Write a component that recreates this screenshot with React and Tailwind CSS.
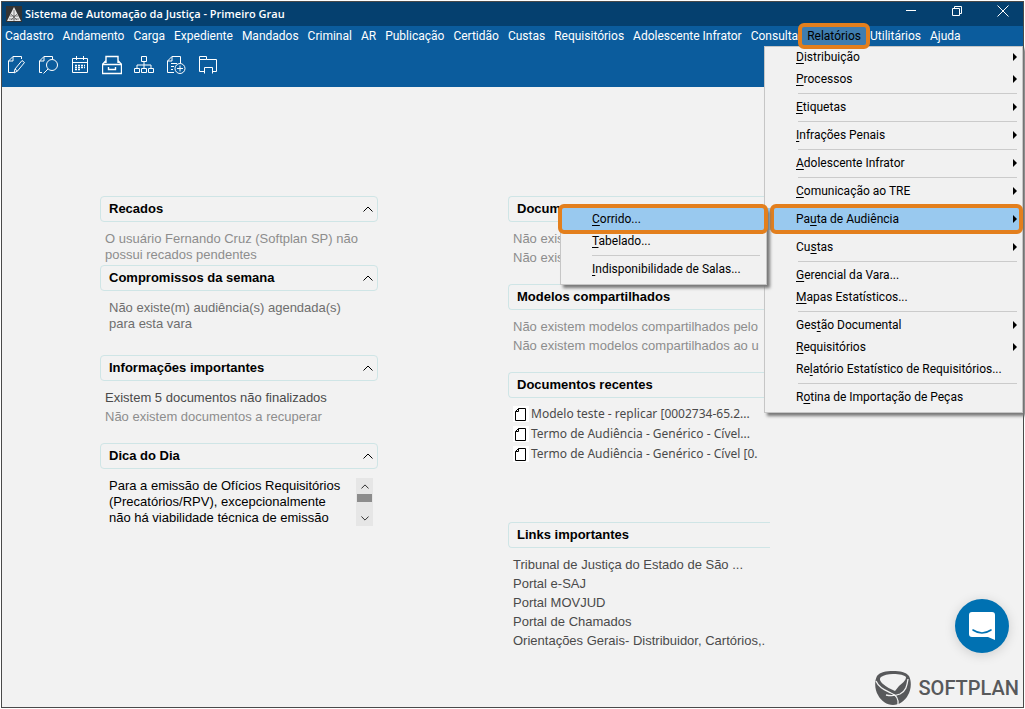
const menuBar = [
  "Cadastro",
  "Andamento",
  "Carga",
  "Expediente",
  "Mandados",
  "Criminal",
  "AR",
  "Publicação",
  "Certidão",
  "Custas",
  "Requisitórios",
  "Adolescente Infrator",
  "Consulta",
  "Relatórios",
  "Utilitários",
  "Ajuda",
];

// "&" marks the access key of an entry, "-" is a separator
const reportMenu = [
  { label: "&Distribuição", sub: true },
  { label: "&Processos", sub: true },
  "-",
  { label: "&Etiquetas", sub: true },
  "-",
  { label: "&Infrações Penais", sub: true },
  "-",
  { label: "&Adolescente Infrator", sub: true },
  "-",
  { label: "&Comunicação ao TRE", sub: true },
  "-",
  { label: "Pa&uta de Audiência", sub: true, open: true },
  "-",
  { label: "Cu&stas", sub: true },
  "-",
  { label: "&Gerencial da Vara..." },
  { label: "&Mapas Estatísticos..." },
  "-",
  { label: "Ges&tão Documental", sub: true },
  { label: "&Requisitórios", sub: true },
  { label: "Re&latório Estatístico de Requisitórios..." },
  "-",
  { label: "R&otina de Importação de Peças" },
];

const hearingMenu = [
  { label: "&Corrido...", active: true },
  { label: "&Tabelado..." },
  "-",
  { label: "&Indisponibilidade de Salas..." },
];

const recentDocs = [
  "Modelo teste - replicar [0002734-65.2...",
  "Termo de Audiência - Genérico - Cível...",
  "Termo de Audiência - Genérico - Cível [0.",
];

const links = [
  "Tribunal de Justiça do Estado de São ...",
  "Portal e-SAJ",
  "Portal MOVJUD",
  "Portal de Chamados",
  "Orientações Gerais- Distribuidor, Cartórios,.",
];

const tools = [
  {
    name: "Editar documento",
    art: (
      <>
        <path d="M8 17.500H2.500V6L7 1.500H15.500V4" />
        <path d="M2.500 6H7V1.500" />
        <path d="M8 18l1-4 7-8.500 2.500 2-7 8.500zM9 14l2.500 2" />
      </>
    ),
  },
  {
    name: "Consultar documento",
    art: (
      <>
        <path d="M4 17.500H1.500V6L6 1.500H14.500V4" />
        <path d="M1.500 6H6V1.500" />
        <circle cx="14" cy="10" r="5.500" />
        <path d="M10 14l-4.500 4.500" />
      </>
    ),
  },
  {
    name: "Agenda",
    art: (
      <>
        <path d="M2.500 3.500h15v14h-15zM2.500 7.500h15M6.500 1v4M13.500 1v4" />
        <path d="M5 10.500h10M5 12.500h10M5 14.500h6" strokeDasharray="2 1" strokeWidth="1.400" />
      </>
    ),
  },
  {
    name: "Arquivo",
    art: (
      <>
        <path d="M4 8V1.500h12V8M4 5.500L0.500 9.500M16 5.500l3.500 4" strokeWidth="1.400" />
        <path d="M0.500 9.500h19v9h-19z" strokeWidth="1.400" />
        <path d="M6.500 12v2.500h7V12" strokeWidth="1.400" />
      </>
    ),
  },
  {
    name: "Fluxo de trabalho",
    art: (
      <>
        <path d="M7.500 1.500h5v5h-5zM0.500 13.500h5v4h-5zM7.500 13.500h5v4h-5zM14.500 13.500h5v4h-5z" />
        <path d="M10 6.500v7M3 13.500v-3.500h14v3.500" />
      </>
    ),
  },
  {
    name: "Novo expediente",
    art: (
      <>
        <path d="M8 17.500H1.500V6L6 1.500H14.500V8" />
        <path d="M1.500 6H6V1.500M5 8.500h6M5 11.500h3M5 14.500h2" />
        <circle cx="14" cy="13.500" r="5" />
        <path d="M14 10.500v6M11 13.500h6" />
      </>
    ),
  },
  {
    name: "Pastas",
    art: (
      <>
        <path d="M6 16.500H1.500V1.500H8.500V4.500H18.500V16.500H15" />
        <path d="M6.500 18.500V12.500h8v6M1.500 4.500h7" />
      </>
    ),
  },
];

function AccessLabel({ text }) {
  const [before, after] = text.split("&");
  return (
    <span>
      {before}
      <span className="underline underline-offset-2">{after[0]}</span>
      {after.slice(1)}
    </span>
  );
}

function Menu({ items, inset, children }) {
  return (
    <ul
      role="menu"
      className="bg-[#f1f1f1] pb-[5px] text-black shadow-[inset_0_0_0_1px_#c6c6c6,3px_3px_3px_#777777]"
    >
      {items.map((item, i) =>
        item === "-" ? (
          <li key={i} role="separator" className={inset}>
            <hr className="mt-[3px] mb-[2px] h-px border-0 bg-[#cbcbcb]" />
          </li>
        ) : (
          <li key={i} role="none" className="relative">
            <button
              role="menuitem"
              className={`relative flex h-[22px] w-full items-center justify-between pr-[6px] pl-8 ${
                item.open || item.active ? "bg-[#99c9ef]" : ""
              }`}
            >
              <AccessLabel text={item.label} />
              {item.sub && (
                <svg className="h-2 w-1" viewBox="0 0 4 8" aria-hidden="true">
                  <path d="M0 0l4 4-4 4z" />
                </svg>
              )}
            </button>
            {item.open && (
              <>
                <span className="pointer-events-none absolute -inset-y-1 right-0 left-[6px] rounded-md border-4 border-[#e37f1d]" />
                {children}
              </>
            )}
            {item.active && (
              <span className="pointer-events-none absolute -inset-y-1 -right-px -left-[2px] rounded-md border-4 border-[#e37f1d]" />
            )}
          </li>
        ),
      )}
    </ul>
  );
}

function Chevron({ down, className }) {
  return (
    <svg className={className} viewBox="0 0 10 6" fill="none" stroke="currentColor" aria-hidden="true">
      <path d={down ? "M0.500 0.500L5 5l4.500-4.500" : "M0.500 5.500L5 1l4.500 4.500"} />
    </svg>
  );
}

function Panel({ title, open, className, children }) {
  return (
    <section className={className}>
      <h2
        className={`flex h-[26px] items-center justify-between border border-[#cfe5e6] px-2 font-bold text-black ${
          open ? "rounded-l border-r-0" : "rounded"
        }`}
      >
        {title}
        {!open && (
          <button aria-label={`Recolher ${title}`} className="-mr-1">
            <Chevron className="h-[6px] w-[10px]" />
          </button>
        )}
      </h2>
      {children}
    </section>
  );
}

function TitleBar() {
  return (
    <header className="flex h-6 items-center bg-[#05406f] pl-1 text-white">
      <svg className="h-4 w-4 bg-[#333333]" viewBox="0 0 16 16" aria-hidden="true">
        <path d="M8 1l7 14H1z" fill="#e8e8e8" />
        <path d="M8 4v11M5 8l6 6M11 8l-6 6M4 10h8M3 13h10" stroke="#555555" strokeWidth="0.700" />
      </svg>
      <h1 className="ml-[3px] font-['Open_Sans',sans-serif] text-[11px] font-semibold">
        Sistema de Automação da Justiça - Primeiro Grau
      </h1>
      <div className="ml-auto flex h-full items-start gap-[34px] pt-[3px] pr-[14px]">
        <button aria-label="Minimizar">
          <svg className="h-3 w-3" viewBox="0 0 12 12" stroke="currentColor" aria-hidden="true">
            <path d="M1 5.500h10" />
          </svg>
        </button>
        <button aria-label="Restaurar">
          <svg className="h-3 w-3" viewBox="0 0 12 12" fill="none" stroke="currentColor" aria-hidden="true">
            <path d="M1.500 3.500h7v7h-7zM3.500 3.500v-2h7v7h-2" />
          </svg>
        </button>
        <button aria-label="Fechar">
          <svg className="h-3 w-3" viewBox="0 0 12 12" stroke="currentColor" aria-hidden="true">
            <path d="M0.500 0.500l11 11M11.500 0.500l-11 11" />
          </svg>
        </button>
      </div>
    </header>
  );
}

function MenuBar() {
  return (
    <nav className="flex h-5 items-center gap-[9px] pl-[3px] text-[12px] whitespace-nowrap text-white">
      {menuBar.map((label) =>
        label === "Relatórios" ? (
          <button key={label} className="relative z-30 -mx-[5px] h-5 bg-[#3f7db0] px-[5px] text-black">
            {label}
            <span className="pointer-events-none absolute -inset-x-1 -inset-y-[3px] rounded-md border-4 border-[#e37f1d]" />
          </button>
        ) : (
          <button key={label}>{label}</button>
        ),
      )}
    </nav>
  );
}

function DailyTip() {
  return (
    <div className="mt-[9px] flex h-12 items-start justify-between overflow-hidden pr-[5px] pl-[9px]">
      <p className="leading-4 whitespace-nowrap text-black">
        Para a emissão de Ofícios Requisitórios
        <br />
        (Precatórios/RPV), excepcionalmente
        <br />
        não há viabilidade técnica de emissão
      </p>
      <div className="flex h-12 w-[17px] shrink-0 flex-col items-center bg-[#e6e6e6] text-black">
        <button aria-label="Subir" className="flex h-4 items-center">
          <Chevron className="h-[5px] w-2" />
        </button>
        <span className="h-2 w-[15px] bg-[#8c8c8c]" />
        <button aria-label="Descer" className="mt-auto flex h-4 items-center">
          <Chevron down className="h-[5px] w-2" />
        </button>
      </div>
    </div>
  );
}

export default function App() {
  return (
    <div className="flex min-h-screen bg-white p-px font-['Roboto',sans-serif]">
      <div className="relative flex flex-1 flex-col border border-[#4a4a4a] bg-[#f2f2f2]">
        <TitleBar />
        <div className="bg-[#0b5c9d]">
          <MenuBar />
          <div className="flex h-[41px] items-start gap-3 pt-[9px] pl-1 text-white">
            {tools.map((tool) => (
              <button key={tool.name} aria-label={tool.name}>
                <svg className="h-5 w-5" viewBox="0 0 20 20" fill="none" stroke="currentColor" aria-hidden="true">
                  {tool.art}
                </svg>
              </button>
            ))}
          </div>
        </div>

        <main className="grid grid-cols-[278fr_262fr] gap-x-[130px] pt-[109px] pr-[253px] pb-10 pl-[98px] font-['Liberation_Sans',Arial,sans-serif] text-[13px]">
          <div>
            <Panel title="Recados" className="min-h-[69px]">
              <p className="mt-[9px] pl-[5px] leading-4 text-[#8d8d8d]">
                O usuário Fernando Cruz (Softplan SP) não possui recados pendentes
              </p>
            </Panel>
            <Panel title="Compromissos da semana" className="min-h-[90px]">
              <p className="mt-[9px] pl-[9px] leading-4 text-[#6e6e6e]">
                Não existe(m) audiência(s) agendada(s)
                <br />
                para esta vara
              </p>
            </Panel>
            <Panel title="Informações importantes" className="min-h-[88px]">
              <ul className="mt-[7px] pl-[5px] leading-[19px] text-[#8d8d8d]">
                <li className="text-[#4a4a4a]">Existem 5 documentos não finalizados</li>
                <li>Não existem documentos a recuperar</li>
              </ul>
            </Panel>
            <Panel title="Dica do Dia">
              <DailyTip />
            </Panel>
          </div>

          <div className="min-w-0 overflow-hidden whitespace-nowrap">
            <Panel open title="Documentos compartilhados" className="min-h-[88px]">
              <ul className="mt-[7px] pl-[5px] leading-[19px] text-[#8d8d8d]">
                <li>Não existem documentos</li>
                <li>Não existem documentos</li>
              </ul>
            </Panel>
            <Panel open title="Modelos compartilhados" className="min-h-[88px]">
              <ul className="mt-[7px] pl-[5px] leading-[19px] text-[#8d8d8d]">
                <li>Não existem modelos compartilhados pelo</li>
                <li>Não existem modelos compartilhados ao u</li>
              </ul>
            </Panel>
            <Panel open title="Documentos recentes" className="min-h-[150px]">
              <ul className="mt-[6px] pl-[5px] font-['Noto_Sans',sans-serif] text-[12px] leading-5 text-[#4a4a4a]">
                {recentDocs.map((doc) => (
                  <li key={doc}>
                    <a href="#" className="flex items-center gap-[2px]">
                      <svg
                        className="h-4 w-4 shrink-0 bg-white"
                        viewBox="0 0 16 16"
                        fill="none"
                        stroke="black"
                        aria-hidden="true"
                      >
                        <path d="M5.500 2.500h7v12h-10v-9z" />
                        <path d="M2.500 5.500h3v-3" />
                      </svg>
                      {doc}
                    </a>
                  </li>
                ))}
              </ul>
            </Panel>
            <Panel open title="Links importantes">
              <ul className="mt-[7px] pl-[5px] leading-[19px] text-[#4a4a4a]">
                {links.map((link) => (
                  <li key={link}>
                    <a href="#">{link}</a>
                  </li>
                ))}
              </ul>
            </Panel>
          </div>
        </main>

        <div className="absolute top-11 right-0 z-20 w-[259px] text-[12px]">
          <Menu items={reportMenu} inset="pr-[6px] pl-[34px]">
            <div className="absolute top-0 right-[256px] w-[207px]">
              <Menu items={hearingMenu} inset="pr-[7px] pl-8" />
            </div>
          </Menu>
        </div>

        <button
          aria-label="Abrir chat"
          className="absolute right-[14px] bottom-[54px] flex size-[54px] items-center justify-center rounded-full bg-[#0071b2] shadow-[0_2px_12px_rgba(0,0,0,0.15)]"
        >
          <svg className="h-7 w-7" viewBox="0 0 28 28" aria-hidden="true">
            <path d="M4 0h20q3 0 3 3v25l-7-3H4q-3 0-3-3V3q0-3 3-3z" fill="white" />
            <path d="M5 18q9 6 18 0" fill="none" stroke="#0071b2" strokeWidth="1.600" strokeLinecap="round" />
          </svg>
        </button>

        <div className="absolute right-1 bottom-px flex items-center gap-2 text-[#58595b]">
          <svg className="h-9 w-9" viewBox="0 0 36 36" aria-hidden="true">
            <path
              d="M18 1C11 1 5 2 2 6-1 12 0 20 3 25c3 6 9 10 15 10s12-4 15-10c3-5 4-13 1-19-3-4-9-5-16-5z"
              fill="currentColor"
            />
            <path d="M18 4c7 0 11 1 13 3 0 4-4 6-7 9l-4 5c-4-2-9-4-12-7-3-3-4-5-2-7 3-2 7-3 12-3z" fill="#f2f2f2" />
            <path
              d="M1 11c3 7 9 9 15 12 5 2 8 5 7 12M33 9c-1 7-2 12-8 15-5 2-10 2-14 1"
              fill="none"
              stroke="#f2f2f2"
              strokeWidth="1.300"
            />
          </svg>
          <span className="text-[20px] leading-9 font-medium">SOFTPLAN</span>
        </div>
      </div>
    </div>
  );
}
